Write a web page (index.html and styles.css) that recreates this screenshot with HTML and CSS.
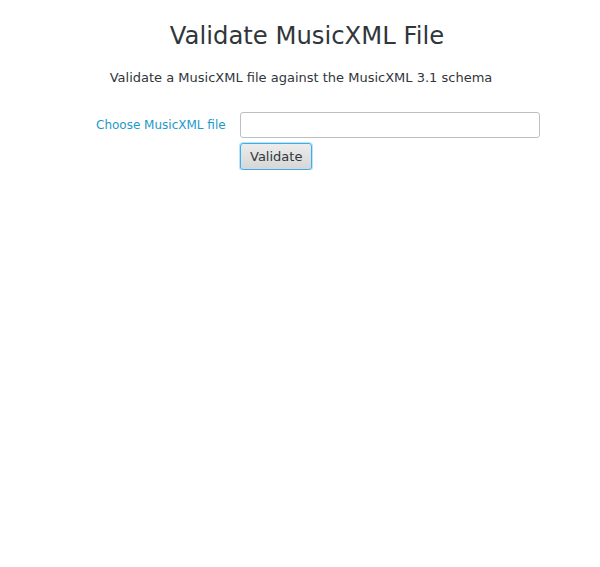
FILE: index.html
```html
<!DOCTYPE html>
<html>
<head>
<meta charset="utf-8">
<title>Validate MusicXML File</title>
<link rel="stylesheet" href="styles.css">
</head>
<body>
<div class="page">
  <h1 class="title">Validate MusicXML File</h1>
  <p class="subtitle">Validate a MusicXML file against the MusicXML 3.1 schema</p>
  <form class="form">
    <label class="label" for="file">Choose MusicXML file</label>
    <div class="controls">
      <input class="file" id="file" type="text">
      <button class="btn" type="button">Validate</button>
    </div>
  </form>
</div>
</body>
</html>
```
FILE: styles.css
```css
html, body {
  margin: 0;
  padding: 0;
  background: #ffffff;
}
body {
  font-family: "DejaVu Sans", sans-serif;
  color: #31363b;
}
.page {
  padding-top: 20px;
}
.title {
  margin: 0;
  font-weight: normal;
  font-size: 24.3px;
  line-height: 32px;
  text-align: center;
  padding-left: 14px;
}
.subtitle {
  margin: 17px 0 0 0;
  font-size: 13px;
  line-height: 18px;
  text-align: center;
  padding-left: 2px;
}
.form {
  margin: 25px 0 0 96px;
  display: flex;
  align-items: flex-start;
  gap: 14px;
}
.label {
  font-size: 12px;
  color: #1d99c8;
  line-height: 16px;
  padding-top: 5px;
  width: 130px;
}
.controls {
  display: flex;
  flex-direction: column;
  align-items: flex-start;
  gap: 5px;
}
.file {
  box-sizing: border-box;
  width: 300px;
  height: 26px;
  border: 1px solid #bcbebf;
  border-radius: 3px;
  margin: 0;
  padding: 0 6px;
  background: #fff;
  font-family: "DejaVu Sans", sans-serif;
}
.btn {
  box-sizing: border-box;
  height: 27px;
  padding: 0 9px;
  margin: 0;
  border: 1px solid #3daee9;
  border-radius: 3px;
  box-shadow: 0 0 0 1px rgba(61, 174, 233, 0.35);
  background: linear-gradient(#ececec, #d6d6d6);
  font-family: "DejaVu Sans", sans-serif;
  font-size: 13px;
  color: #31363b;
}
```
